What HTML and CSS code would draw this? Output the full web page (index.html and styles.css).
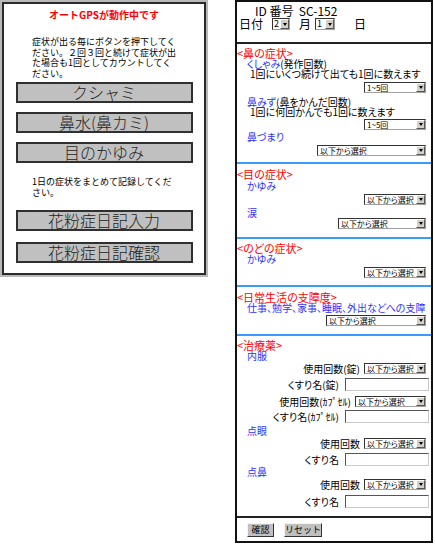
FILE: index.html
```html
<!DOCTYPE html>
<html lang="ja">
<head>
<meta charset="utf-8">
<title>花粉症日記</title>
<link rel="stylesheet" href="styles.css">
</head>
<body>
<div class="screens">
  <section class="phone">
    <h1 class="gps-title">オートGPSが動作中です</h1>
    <p class="guide">症状が出る毎にボタンを押下してください。２回３回と続けて症状が出た場合も1回としてカウントしてください。</p>
    <button class="big-btn b1" type="button">クシャミ</button>
    <button class="big-btn b2" type="button">鼻水(鼻カミ)</button>
    <button class="big-btn b2" type="button">目のかゆみ</button>
    <p class="guide guide-2">1日の症状をまとめて記録してください。</p>
    <button class="big-btn b4" type="button">花粉症日記入力</button>
    <button class="big-btn b5" type="button">花粉症日記確認</button>
  </section>

  <form class="diary">
    <div class="id-row">ID 番号&nbsp; SC-152</div>
    <div class="date-row">
      <span>日付</span>
      <span class="sel w18 d-m"><span class="sel-val">2</span><span class="sel-arrow"></span></span>
      <span class="d-month">月</span>
      <span class="sel w20 d-d"><span class="sel-val">1</span><span class="sel-arrow"></span></span>
      <span class="d-day">日</span>
    </div>
    <div class="rule-black mt12"></div>

    <div class="sec mt4">&lt;鼻の症状&gt;</div>
    <div class="item"><span class="blue">くしゃみ</span>(発作回数)</div>
    <div class="note">1回にいくつ続けて出ても1回に数えます</div>
    <div class="field mt3"><span class="sel w62"><span class="sel-val">1~5回</span><span class="sel-arrow"></span></span></div>
    <div class="item mt4"><span class="blue">鼻みず</span>(鼻をかんだ回数)</div>
    <div class="note">1回に何回かんでも1回に数えます</div>
    <div class="field mt2"><span class="sel w62"><span class="sel-val">1~5回</span><span class="sel-arrow"></span></span></div>
    <div class="item blue mt2">鼻づまり</div>
    <div class="field mt3"><span class="sel w109"><span class="sel-val">以下から選択</span><span class="sel-arrow"></span></span></div>
    <div class="rule-blue mt6"></div>

    <div class="sec mt5">&lt;目の症状&gt;</div>
    <div class="item blue mt1">かゆみ</div>
    <div class="field mt3"><span class="sel w62"><span class="sel-val">以下から選択</span><span class="sel-arrow"></span></span></div>
    <div class="item blue mt3">涙</div>
    <div class="field"><span class="sel w88"><span class="sel-val">以下から選択</span><span class="sel-arrow"></span></span></div>
    <div class="rule-blue mt8"></div>

    <div class="sec mt4">&lt;のどの症状&gt;</div>
    <div class="item blue">かゆみ</div>
    <div class="field mt3"><span class="sel w62"><span class="sel-val">以下から選択</span><span class="sel-arrow"></span></span></div>
    <div class="rule-blue mt7"></div>

    <div class="sec mt5">&lt;日常生活の支障度&gt;</div>
    <div class="item blue">仕事、勉学、家事、睡眠、外出などへの支障</div>
    <div class="field mt2"><span class="sel w100"><span class="sel-val">以下から選択</span><span class="sel-arrow"></span></span></div>
    <div class="rule-blue mt8"></div>

    <div class="sec mt4">&lt;治療薬&gt;</div>
    <div class="item blue">内服</div>
    <div class="field mt2"><span class="lbl">使用回数(錠)</span><span class="sel w62"><span class="sel-val">以下から選択</span><span class="sel-arrow"></span></span></div>
    <div class="field text-field mt4"><span class="lbl">くすり名(錠)</span><input class="txt" type="text"></div>
    <div class="field mt5"><span class="lbl">使用回数(ｶﾌﾟｾﾙ)</span><span class="sel w71"><span class="sel-val">以下から選択</span><span class="sel-arrow"></span></span></div>
    <div class="field text-field mt3"><span class="lbl">くすり名(ｶﾌﾟｾﾙ)</span><input class="txt" type="text"></div>
    <div class="item blue mt3">点眼</div>
    <div class="field mt2"><span class="lbl">使用回数</span><span class="sel w62"><span class="sel-val">以下から選択</span><span class="sel-arrow"></span></span></div>
    <div class="field text-field mt4"><span class="lbl">くすり名</span><input class="txt" type="text"></div>
    <div class="item blue mt1">点鼻</div>
    <div class="field mt2"><span class="lbl">使用回数</span><span class="sel w62"><span class="sel-val">以下から選択</span><span class="sel-arrow"></span></span></div>
    <div class="field text-field mt5"><span class="lbl">くすり名</span><input class="txt" type="text"></div>
    <div class="rule-black mt8"></div>

    <div class="actions">
      <button class="sm-btn confirm" type="button">確認</button>
      <button class="sm-btn reset" type="reset">リセット</button>
    </div>
  </form>
</div>
</body>
</html>
```

FILE: styles.css
```css
* {
  box-sizing: border-box;
  margin: 0;
  padding: 0;
}

body {
  margin: 0;
  background: #fff;
  color: #000;
  font-family: "Noto Sans CJK JP", "Noto Sans", sans-serif;
}

.screens {
  display: flex;
  align-items: flex-start;
}

/* ---------- left: phone screen ---------- */
.phone {
  margin: 2px;
  width: 204px;
  height: 273px;
  border: 2px solid #2b2b2b;
  outline: 2px solid #b9b9b9;
  display: flex;
  flex-direction: column;
  align-items: center;
}

.gps-title {
  margin-top: 5px;
  font-size: 10px;
  line-height: 12px;
  font-weight: bold;
  color: #f00;
}

.guide {
  align-self: flex-start;
  margin-top: 16px;
  margin-left: 28px;
  width: 146px;
  font-size: 9px;
  line-height: 10.5px;
  color: #000;
}

.guide-2 {
  margin-top: 14px;
}

.big-btn {
  width: 177px;
  height: 21px;
  background: #c0c0c0;
  border: 2px solid #303030;
  font-family: "Noto Sans CJK JP", sans-serif;
  font-size: 16px;
  font-weight: 300;
  line-height: 17px;
  color: #1e1e1e;
}

.b1 { margin-top: 3px; }
.b2 { margin-top: 9px; }
.b4 { margin-top: 12px; }
.b5 { margin-top: 11px; }

/* ---------- right: diary form ---------- */
.diary {
  margin-left: 27px;
  width: 198px;
  height: 543px;
  border: 2px solid #111;
  font-size: 10px;
  line-height: 10px;
  font-feature-settings: "palt" 1;
}

.id-row {
  padding-top: 2px;
  padding-left: 18px;
  height: 16px;
  font-size: 12px;
  line-height: 14px;
}

.date-row {
  display: flex;
  align-items: center;
  height: 12px;
  padding-left: 2px;
  font-size: 12px;
  line-height: 12px;
}

.d-m { margin-left: 9px; }
.d-month { margin-left: 9px; }
.d-d { margin-left: 4px; }
.d-day { margin-left: 19px; }

.rule-black {
  height: 2px;
  background: #222;
}

.rule-blue {
  height: 2px;
  background: #3a9bff;
}

.sec {
  height: 11px;
  font-size: 11px;
  line-height: 11px;
  color: #f00;
  white-space: nowrap;
}

.item {
  height: 10px;
  padding-left: 10px;
  white-space: nowrap;
}

.note {
  height: 10px;
  padding-left: 13px;
  white-space: nowrap;
}

.blue {
  color: #2f2fff;
}

.field {
  display: flex;
  justify-content: flex-end;
  align-items: center;
  height: 11px;
  padding-right: 5px;
}

.text-field {
  height: 13px;
  padding-right: 2px;
}

.lbl {
  margin-right: 4px;
  white-space: nowrap;
}

.text-field .lbl {
  margin-right: 6px;
}

/* fake drop-down */
.sel {
  display: inline-flex;
  align-items: stretch;
  height: 11px;
  background: #fff;
  border: 1px solid #333;
  border-right-color: #a0a0a0;
  border-bottom-color: #a0a0a0;
  font-size: 8px;
  line-height: 9px;
  color: #000;
}

.date-row .sel {
  height: 12px;
  font-size: 9px;
  line-height: 10px;
}

.sel-val {
  flex: 1;
  padding-left: 2px;
  white-space: nowrap;
}

.date-row .sel-val {
  padding-left: 1px;
}

.sel-arrow {
  flex: 0 0 9px;
  display: flex;
  align-items: center;
  justify-content: center;
  background: #d4d0c8;
  border-left: 1px solid #fff;
  border-top: 1px solid #fff;
  border-right: 1px solid #555;
  border-bottom: 1px solid #555;
}

.sel-arrow::after {
  content: "";
  border-left: 2.5px solid transparent;
  border-right: 2.5px solid transparent;
  border-top: 3px solid #000;
}

.w18 { width: 18px; }
.w20 { width: 20px; }
.w62 { width: 62px; }
.w71 { width: 71px; }
.w88 { width: 88px; }
.w100 { width: 100px; }
.w109 { width: 109px; }

.txt {
  width: 84px;
  height: 13px;
  padding: 0;
  background: #fff;
  border: 1px solid #555;
  border-right-color: #c8c8c8;
  border-bottom-color: #c8c8c8;
  outline: none;
}

.actions {
  display: flex;
  gap: 10px;
  margin-top: 5px;
  padding-left: 10px;
}

.sm-btn {
  height: 14px;
  background: #c0c0c0;
  border: 1px solid;
  border-color: #f4f4f4 #333 #333 #f4f4f4;
  font-family: "Noto Sans CJK JP", sans-serif;
  font-size: 9px;
  line-height: 12px;
  color: #000;
}

.confirm { width: 27px; }
.reset { width: 38px; }

.mt1 { margin-top: 1px; }
.mt2 { margin-top: 2px; }
.mt3 { margin-top: 3px; }
.mt4 { margin-top: 4px; }
.mt5 { margin-top: 5px; }
.mt6 { margin-top: 6px; }
.mt7 { margin-top: 7px; }
.mt8 { margin-top: 8px; }
.mt12 { margin-top: 12px; }
```
